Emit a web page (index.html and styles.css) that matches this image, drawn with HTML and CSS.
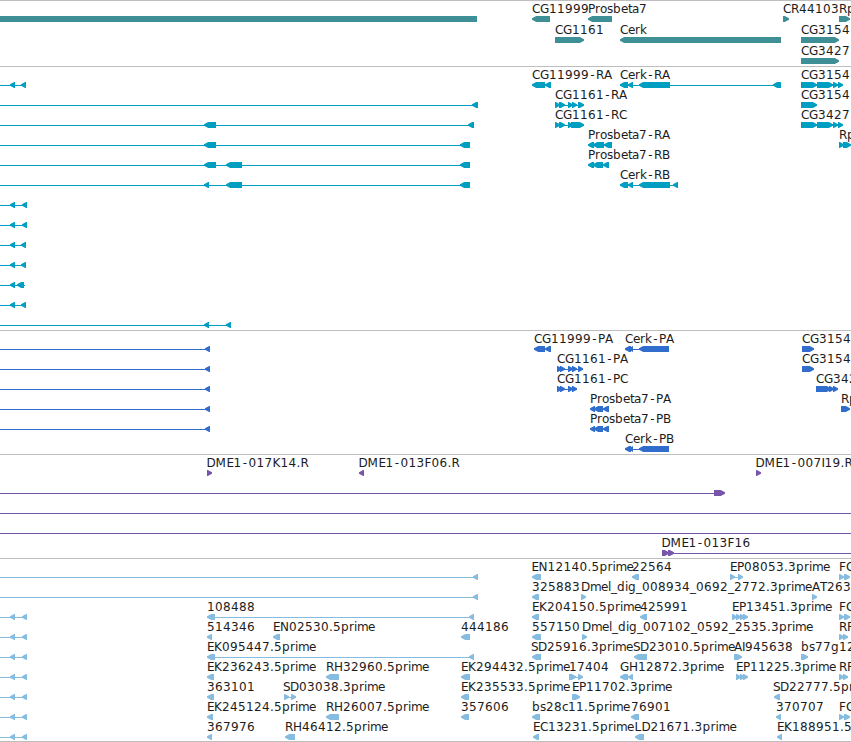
FILE: index.html
```html
<!DOCTYPE html>
<html lang="en">
<head>
<meta charset="utf-8">
<title>Genome tracks</title>
<link rel="stylesheet" href="styles.css">
</head>
<body>
<main class="browser" id="browser"></main>
<script src="tracks.js"></script>
</body>
</html>
```
FILE: styles.css
```css
body {
  margin: 0;
  background: #fff;
}

.browser {
  display: flex;
  flex-direction: column;
  width: 851px;
  height: 742px;
  overflow: hidden;
  box-sizing: border-box;
  border-bottom: 1px solid #bebebe;
}

.track {
  display: flex;
  flex-direction: column;
  flex: none;
  border-top: 1px solid #bebebe;
  padding-bottom: 3px;
}

.track.genes { color: #3f8f96; padding-bottom: 2px; }
.track.transcripts { color: #009ec0; }
.track.proteins { color: #316dcc; }
.track.clones { color: #7755a8; }
.track.ests { color: #86bcdf; padding-bottom: 2px; }

.row {
  display: block;
  flex: none;
  width: 851px;
  height: 20px;
  overflow: visible;
}

.genes .row { height: 21px; }

.shape { fill: currentColor; }

.label {
  fill: #1c1c1c;
  font-family: "DejaVu Sans", sans-serif;
  font-size: 12px;
}
```
FILE: tracks.js
```js
// Row items, separated by commas:
//   "-a:b"  connector line     "#a:b"  plain bar
//   "<a:b"  left-facing block  ">a:b"  right-facing block
//   "name@x" label starting at x
const tracks = [
  { kind: "genes", rows: [
    "#0:477,<532:550,<588:612,>783:789,>839:850,CG11999@532,Prosbeta7@588,CR44103@783,Rp@839",
    ">555:584,<620:781,>801:839,CG1161@555,Cerk@620,CG3154@801",
    ">801:839,CG3427@801"
  ]},
  { kind: "transcripts", rows: [
    "-0:26,<10:15,<21:26,<532:545,<545:551,-620:781,<620:628,<628:633,<639:670,<773:781,-801:843,>801:817,>817:833,>833:838,>838:843,CG11999-RA@532,Cerk-RA@620,CG3154@801",
    "-0:477,<472:478,-555:584,>555:560,>559:565,>568:573,>572:577,>578:584,>801:817,CG1161-RA@555,CG3154@801",
    "-0:474,<204:216,<468:474,-555:584,>555:560,>559:565,>568:573,>571:584,-801:843,>801:817,>817:833,>833:838,>838:843,CG1161-RC@555,CG3427@801",
    "-0:470,<204:216,<460:470,<588:594,<593:604,<604:612,>839:844,>843:851,Prosbeta7-RA@588,Rp@839",
    "-0:470,<204:216,<226:242,<460:470,<588:594,<593:603,<603:609,Prosbeta7-RB@588",
    "-0:470,<204:209,<226:242,<460:470,-620:678,<620:628,<628:633,<639:670,<673:678,Cerk-RB@620",
    "-0:27,<10:15,<22:27",
    "-0:27,<10:15,<22:27",
    "-0:26,<10:15,<21:26",
    "-0:26,<10:15,<21:26",
    "-0:25,<10:15,<17:24",
    "-0:26,<10:15,<21:26",
    "-0:231,<204:209,<226:231"
  ]},
  { kind: "proteins", rows: [
    "-0:210,<205:210,<534:545,<545:551,-625:669,<625:631,<629:633,<639:669,>802:814,CG11999-PA@534,Cerk-PA@625,CG3154@802",
    "-0:210,<205:210,-557:583,>557:562,>560:565,>568:573,>572:577,>578:583,>802:814,CG1161-PA@557,CG3154@802",
    "-0:210,<205:210,-557:577,>557:562,>560:565,>568:573,>572:577,>816:831,>829:834,>833:838,CG1161-PC@557,CG3427@816",
    "-0:210,<205:210,<590:595,<594:603,<603:609,>841:850,Prosbeta7-PA@590,Rp@841",
    "-0:210,<205:210,<590:595,<594:603,<603:609,Prosbeta7-PB@590",
    "-625:669,<625:631,<629:633,<639:669,Cerk-PB@625"
  ]},
  { kind: "clones", rows: [
    ">207:212,<359:364,>756:761,DME1-017K14.R@206.5,DME1-013F06.R@358.5,DME1-007I19.R@755.5",
    "-0:725,>714:725",
    "-0:851",
    "-0:851",
    "-662:851,>662:669,>668:674,DME1-013F16@661.5"
  ]},
  { kind: "ests", rows: [
    "-0:477,<473:478,<532:541,<632:639,-730:743,>730:735,>738:743,>839:844,>844:850,EN12140.5prime@531.5,22564@632,EP08053.3prime@730,FC@839",
    "-0:477,<473:478,<532:539,>581:586,>812:817,325883@532,Dmel_dig_008934_0692_2772.3prime@581,AT263@812",
    "-0:27,<10:15,<22:27,-207:474,<207:215,<469:474,<532:539,<640:647,>732:737,>736:741,>740:745,>743:748,>839:844,>844:850,108488@207,EK204150.5prime@532,425991@640,EP13451.3prime@732,FC@839",
    "-0:27,<10:15,<22:27,<207:212,<273:280,<461:470,<532:541,>582:587,>839:844,>843:848,514346@207,EN02530.5prime@273,444186@461,557150@532,Dmel_dig_007102_0592_2535.3prime@582,RF@839",
    "-0:27,<10:15,<22:27,-207:474,<207:215,<469:474,<532:541,<634:647,>734:742,>801:808,EK095447.5prime@207,SD25916.3prime@531,SD23010.5prime@633,AI945638@734,bs77g12@801",
    "-0:27,<10:15,<22:27,<207:214,<326:339,<461:470,-569:583,>569:576,>578:583,<620:628,<628:633,>736:741,>740:745,>743:748,>839:844,>843:848,EK236243.5prime@207,RH32960.5prime@326,EK294432.5prime@461,17404@569,GH12872.3prime@620,EP11225.3prime@736,RF@839",
    "-0:27,<10:15,<22:27,<207:214,-284:296,>284:289,>291:296,<461:469,>572:580,<774:780,363101@207,SD03038.3prime@283,EK235533.5prime@461,EP11702.3prime@572,SD22777.5pr@773",
    "-0:27,<10:15,<22:27,<207:213,<326:339,<461:469,<532:540,<631:639,<776:781,>839:844,>844:850,EK245124.5prime@207,RH26007.5prime@326,357606@461,bs28c11.5prime@532,76901@631,370707@776,FC@839",
    "-0:27,<10:15,<22:27,<207:212,<285:295,<533:539,<635:644,<777:782,367976@207,RH46412.5prime@285,EC13231.5prime@533,LD21671.3prime@634.5,EK188951.5@777"
  ]}
];

// Whole-pixel advance of each character; digits and unlisted ones take 8.
const advance = {
  C: 8, G: 9, R: 8, A: 8, P: 7, D: 9, M: 11, E: 7, K: 8, N: 9, H: 9, S: 7,
  F: 7, L: 7, I: 3, T: 7, r: 5, o: 7, s: 6, b: 8, e: 7, t: 4, a: 7, k: 7,
  p: 8, i: 3, m: 11, l: 3, d: 8, g: 8, c: 6, _: 6, "-": 7, ".": 4
};

const MID = 18;
const NS = "http://www.w3.org/2000/svg";

function add(parent, name, attrs) {
  const node = document.createElementNS(NS, name);
  for (const key in attrs) node.setAttribute(key, attrs[key]);
  parent.appendChild(node);
  return node;
}

function drawLabel(svg, text, start) {
  let x = start;
  const xs = [...text].map(ch => {
    // the hyphen glyph is narrow, so it is centred in its cell
    const at = ch === "-" ? x + 1.3 : x;
    x += advance[ch] || 8;
    return at;
  });
  add(svg, "text", { class: "label", x: xs.join(" "), y: MID - 6 }).textContent = text;
}

function drawItem(svg, item) {
  const label = item.match(/^(.+)@([\d.]+)$/);
  if (label) return drawLabel(svg, label[1], +label[2]);
  const [a, b] = item.slice(1).split(":").map(Number);
  const top = MID - 3, bottom = MID + 3;
  if (item[0] === "-") {
    add(svg, "rect", { class: "shape", x: a, y: MID, width: b - a, height: 1 });
  } else if (item[0] === "#") {
    add(svg, "rect", { class: "shape", x: a, y: top, width: b - a, height: 6 });
  } else {
    const left = item[0] === "<";
    const tip = left ? a : b, back = left ? b : a;
    const neck = left ? Math.min(a + 4.2, b) : Math.max(b - 4.2, a);
    add(svg, "polygon", {
      class: "shape",
      points: `${tip},${MID - 0.7} ${neck},${top} ${back},${top} ${back},${bottom} ${neck},${bottom} ${tip},${MID + 0.7}`
    });
  }
}

const browser = document.getElementById("browser");
for (const track of tracks) {
  const section = document.createElement("section");
  section.className = "track " + track.kind;
  for (const row of track.rows) {
    const svg = add(section, "svg", { class: "row" });
    row.split(",").forEach(item => drawItem(svg, item));
  }
  browser.appendChild(section);
}
```
